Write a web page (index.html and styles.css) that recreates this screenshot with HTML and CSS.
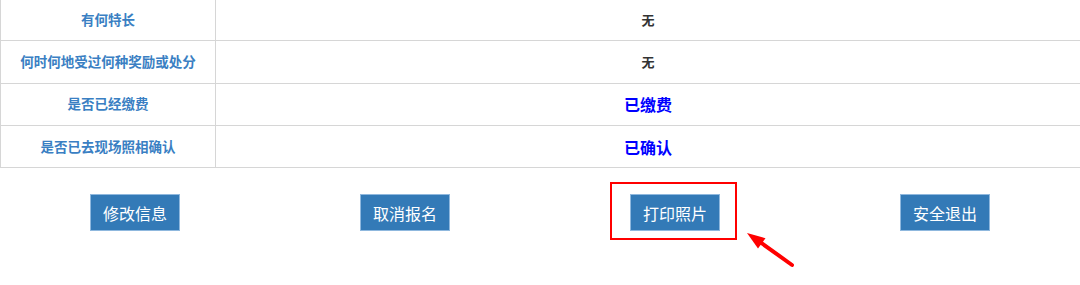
FILE: index.html
```html
<!DOCTYPE html>
<html lang="zh-CN">
<head>
  <meta charset="UTF-8" />
  <title>报名信息</title>
  <link rel="stylesheet" href="styles.css">
</head>
<body>

<div class="page">
  <table class="info">
    <tr>
      <th>有何特长</th>
      <td>无</td>
    </tr>
    <tr>
      <th>何时何地受过何种奖励或处分</th>
      <td>无</td>
    </tr>
    <tr>
      <th>是否已经缴费</th>
      <td class="status">已缴费</td>
    </tr>
    <tr>
      <th>是否已去现场照相确认</th>
      <td class="status">已确认</td>
    </tr>
  </table>

  <div class="actions">
    <div class="cell"><button class="btn">修改信息</button></div>
    <div class="cell"><button class="btn">取消报名</button></div>
    <div class="cell"><button class="btn">打印照片</button></div>
    <div class="cell"><button class="btn">安全退出</button></div>
  </div>

  <!-- annotation: red frame + arrow around the print button -->
  <div class="mark"></div>
  <svg class="arrow" width="60" height="45" viewBox="0 0 60 45">
    <line x1="20" y1="16" x2="52" y2="39" stroke="#f00" stroke-width="4" stroke-linecap="round"/>
    <polygon points="7,7 25.5,12.2 18,22.5" fill="#f00"/>
  </svg>
</div>

</body>
</html>
```

FILE: styles.css
```css
html, body {
  height: 100%;
}
body {
  margin: 0;
  background-color: #ffffff;
  font-family: "Noto Sans CJK SC", "Microsoft YaHei", sans-serif;
}
.page {
  position: relative;
  min-height: 285px;
}

/* info table */
.info {
  width: 100%;
  border-collapse: collapse;
  table-layout: fixed;
  margin-top: -2px;
}
.info th,
.info td {
  border: 1px solid #d6d6d6;
  height: 41.3px;
  padding: 0;
  text-align: center;
  vertical-align: middle;
  line-height: 1;
}
.info th {
  width: 214px;
  color: #3a7fc3;
  font-size: 13.5px;
  font-weight: bold;
}
.info td {
  color: #333;
  font-size: 13px;
  font-weight: bold;
  border-right: none;
}
.info td.status {
  color: #0000ff;
  font-size: 16px;
}

/* buttons */
.actions {
  display: grid;
  grid-template-columns: repeat(4, 1fr);
  margin-top: 26px;
}
.cell {
  display: flex;
  justify-content: center;
}
.btn {
  width: 90px;
  height: 37px;
  padding: 0;
  background-color: #337ab7;
  border: 1px solid #8fb8de;
  color: #fff;
  font-family: inherit;
  font-size: 16px;
  cursor: pointer;
}

/* annotation overlay */
.mark {
  position: absolute;
  left: 610px;
  top: 184px;
  width: 123px;
  height: 54px;
  border: 2px solid #f00;
}
.arrow {
  position: absolute;
  left: 740px;
  top: 228px;
}
```
